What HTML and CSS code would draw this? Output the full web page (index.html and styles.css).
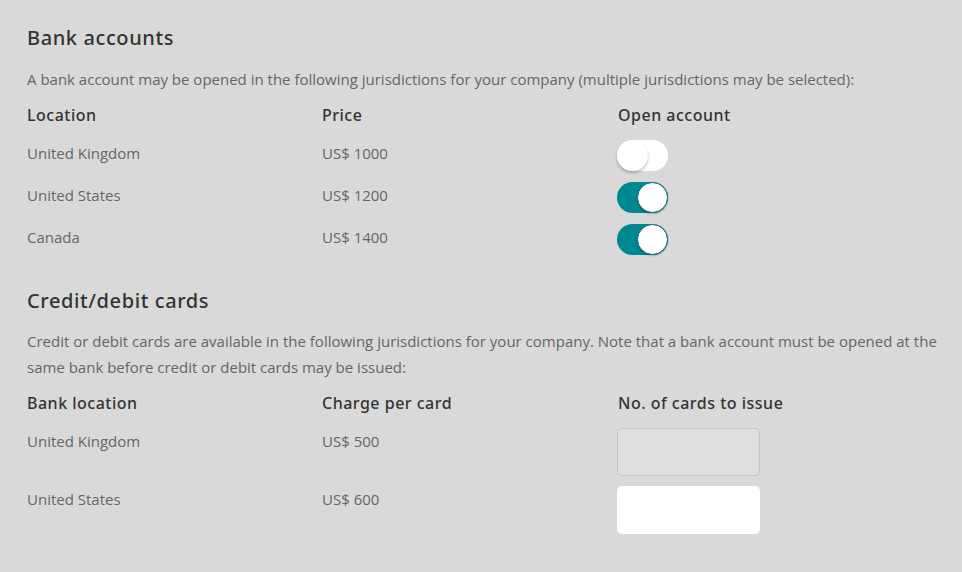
FILE: index.html
```html
<!DOCTYPE html>
<html>
<head>
<meta charset="utf-8">
<link rel="stylesheet" href="styles.css">
</head>
<body>
<div class="page">
  <section class="block">
    <h2 class="title">Bank accounts</h2>
    <p class="desc">A bank account may be opened in the following jurisdictions for your company (multiple jurisdictions may be selected):</p>
    <div class="grid head">
      <div>Location</div><div>Price</div><div class="c3">Open account</div>
    </div>
    <div class="grid row">
      <div>United Kingdom</div><div>US$ 1000</div><div><span class="toggle"><span class="knob"></span></span></div>
    </div>
    <div class="grid row">
      <div>United States</div><div>US$ 1200</div><div><span class="toggle on"><span class="knob"></span></span></div>
    </div>
    <div class="grid row">
      <div>Canada</div><div>US$ 1400</div><div><span class="toggle on"><span class="knob"></span></span></div>
    </div>
  </section>
  <section class="block second">
    <h2 class="title">Credit/debit cards</h2>
    <p class="desc">Credit or debit cards are available in the following jurisdictions for your company. Note that a bank account must be opened at the same bank before credit or debit cards may be issued:</p>
    <div class="grid head head2">
      <div>Bank location</div><div>Charge per card</div><div class="c3">No. of cards to issue</div>
    </div>
    <div class="grid crow">
      <div class="cell">United Kingdom</div><div class="cell">US$ 500</div><div><span class="input disabled"></span></div>
    </div>
    <div class="grid crow">
      <div class="cell">United States</div><div class="cell">US$ 600</div><div><span class="input"></span></div>
    </div>
  </section>
</div>
</body>
</html>
```
FILE: styles.css
```css
html, body {
  margin: 0;
  padding: 0;
  background: #d9d9d9;
}
.page {
  padding: 24px 25px 0 27px;
  font-family: "Open Sans", "Liberation Sans", sans-serif;
  color: #666;
}
.title {
  margin: 0;
  font-family: "Noto Sans", "DejaVu Sans", sans-serif;
  font-weight: 500;
  font-size: 20px;
  line-height: 28px;
  color: #333;
  letter-spacing: 0.6px;
}
.desc {
  margin: 14px 0 0;
  font-size: 15px;
  line-height: 26px;
  color: #666;
}
.second .desc { margin-top: 13px; }
.grid {
  display: grid;
  grid-template-columns: 295px 295px 1fr;
}
.head {
  margin-top: 12px;
  font-family: "Noto Sans", "DejaVu Sans", sans-serif;
  font-size: 16px;
  line-height: 22px;
  letter-spacing: 0.5px;
  color: #333;
  font-weight: 500;
}
.head .c3 { padding-left: 1px; }
.head2 { margin-top: 12px; }
.row {
  height: 42px;
  align-items: center;
  font-size: 15px;
}
.block .head + .row { margin-top: 6px; }
.toggle {
  display: block;
  width: 51px;
  height: 31px;
  border-radius: 16px;
  background: #fff;
  position: relative;
  margin-top: 5px;
}
.toggle.on { background: #008892; }
.knob {
  position: absolute;
  top: 0;
  left: 0;
  width: 31px;
  height: 31px;
  border-radius: 50%;
  background: #fff;
  box-sizing: border-box;
  box-shadow: 0 2px 3px rgba(0,0,0,0.25);
}
.toggle.on .knob {
  left: 20px;
  border: 1px solid #0a6d74;
  box-shadow: 0 1px 2px rgba(0,0,0,0.25);
}
.second { margin-top: 29px; }
.crow {
  height: 58px;
  font-size: 15px;
}
.head + .crow { margin-top: 14px; }
.cell { line-height: 22px; margin-top: 2px; }
.input {
  display: block;
  width: 143px;
  height: 48px;
  border-radius: 5px;
  background: #fff;
  box-sizing: border-box;
}
.input.disabled {
  background: #dfdfdf;
  border: 1px solid #c6c6c6;
}
```
